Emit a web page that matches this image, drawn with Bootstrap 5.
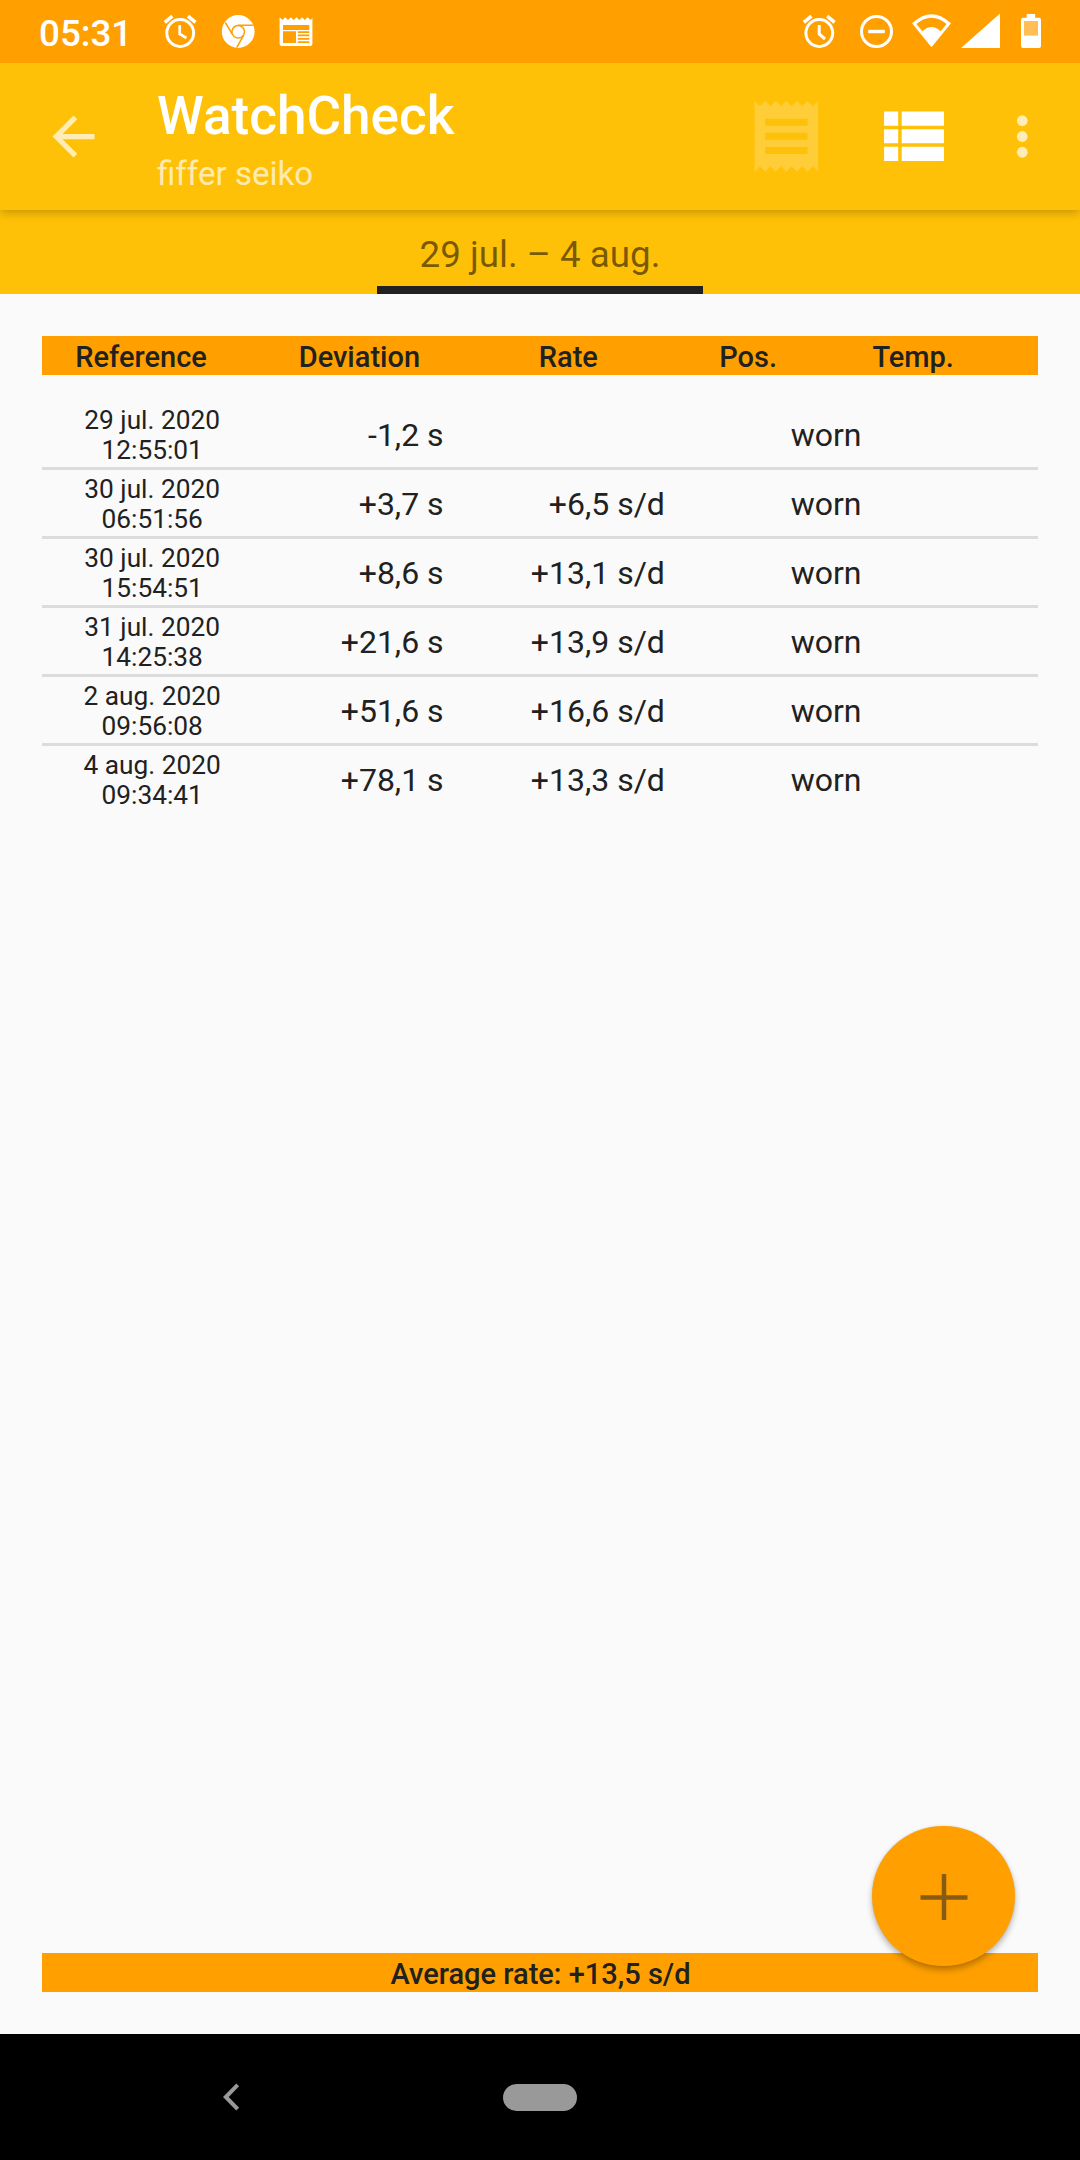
<!DOCTYPE html>
<html lang="en">
<head>
<meta charset="utf-8">
<meta name="viewport" content="width=device-width, initial-scale=1">
<title>WatchCheck</title>
<link href="https://cdn.jsdelivr.net/npm/bootstrap@5.3.0/dist/css/bootstrap.min.css" rel="stylesheet">
<style>
  body { font-family: Roboto, "Noto Sans", sans-serif; background: #fafafa; color: #212121; }
  .screen { width: 1080px; height: 2160px; background: #fafafa; }
  svg { display: block; flex: none; }

  .status-bar { height: 63px; background: #ffa000; padding: 0 35px 0 39px; color: #fff; }
  .clock { font-size: 36.75px; font-weight: 500; line-height: 63px; padding-top: 2px; width: 121px; }

  .app-bar { height: 147px; background: #ffc107; color: #fff; padding: 0 26px 0 42px; z-index: 2;
             box-shadow: 0 3px 9px rgba(0, 0, 0, .22); clip-path: inset(0 0 -16px 0); }
  .app-title { font-size: 53.1px; font-weight: 500; line-height: 60px; }
  .app-subtitle { font-size: 33.1px; line-height: 40px; margin-top: 8px; color: rgba(255, 255, 255, .7); }
  .titles { padding-top: 23px; margin-left: 52px; }
  .action-gap { margin-right: 41px; }

  .tab-strip { height: 84px; background: #ffc107; }
  .tab-item { width: 326px; border-bottom: 8px solid #212121; font-size: 36.75px; line-height: 71px;
              padding-top: 9px; height: 84px; color: rgba(0, 0, 0, .54); }

  .log-area { padding: 42px; }
  .band { height: 39px; background: #ffa000; font-size: 29px; font-weight: 500; line-height: 39px; padding-top: 2px; }
  .h-ref { width: 198.2px; } .h-dev { width: 238.4px; } .h-rate { width: 179.6px; }
  .h-pos { width: 180px; } .h-temp { width: 150px; }
  .band-total { padding-left: 1px; }

  .log-rows { margin-top: 26px; }
  .log-row { height: 69px; border-bottom: 3px solid #dcdcdc; }
  .log-row:last-child { border-bottom-color: transparent; }
  .c-ref { width: 221.3px; font-size: 26.25px; line-height: 30px; padding: 1px 1px 0 0; }
  .c-val { width: 221.3px; font-size: 32px; line-height: 60px; padding: 2px 41px 0 0; }
  .c-pos { width: 221.3px; font-size: 32px; line-height: 60px; padding: 2px 0 0 19px; }

  .fab { width: 143px; height: 140px; left: 872px; top: 1826px; background: #ffa000; z-index: 3;
         box-shadow: 0 4px 6px rgba(0, 0, 0, .27), 0 0 2px rgba(0, 0, 0, .12); }

  .nav-bar { height: 126px; background: #000; padding-left: 222px; }
  .home-pill { width: 74px; height: 27px; background: #999; margin-left: 263px; }
</style>
</head>
<body>
<div class="screen d-flex flex-column position-relative overflow-hidden">

  <header class="status-bar d-flex">
    <div class="clock">05:31</div>
    <svg width="160" height="63" viewBox="160 0 160 63" fill="none" stroke="#fff">
      <!-- alarm -->
      <circle cx="180.2" cy="33" r="13.4" stroke-width="3"/>
      <path d="M179.7 25V34L186.4 38" stroke-width="2.7"/>
      <path d="M164.8 22.4L172.3 16.2M188 16.2L195.5 22.4" stroke-width="3.6"/>
      <!-- browser -->
      <circle cx="238.2" cy="31.5" r="16.4" fill="#fff" stroke="none"/>
      <circle cx="238.2" cy="31.8" r="6.3" stroke="#ffa000" stroke-width="1.5"/>
      <path d="M238 25.2H253.4M232.6 34.6L225.2 22.4M243.8 34.8L236.7 47.6" stroke="#ffa000" stroke-width="1.6"/>
      <!-- news -->
      <path d="M279.6 17.2l2.8 2.8 2.8-2.8 2.8 2.8 2.8-2.8 2.8 2.8 2.8-2.8 2.8 2.8 2.8-2.8 2.8 2.8 2.8-2.8 2.8 2.800 2-2V43.500a2.500 2.500 0 0 1-2.500 2.500H282.100a2.500 2.500 0 0 1-2.500-2.500z" fill="#fff" stroke="none"/>
      <path d="M283 25h26.300v5H283zM283 31.200h13V43H283zM297.800 31.200h11.500v1.700h-11.500zM297.800 34.600h11.500v1.700h-11.500zM297.800 38h11.500v1.700h-11.500zM297.800 41.300h11.500V43h-11.500z" fill="#ffa000" stroke="none"/>
    </svg>
    <svg class="ms-auto" width="245" height="63" viewBox="800 0 245 63" fill="none" stroke="#fff">
      <circle cx="819.3" cy="33" r="13.4" stroke-width="3"/>
      <path d="M819.2 25V34L825 39" stroke-width="3"/>
      <path d="M803.9 22.4L811.4 16.2M827.1 16.2L834.6 22.4" stroke-width="3.6"/>
      <!-- do not disturb -->
      <circle cx="876.5" cy="31.5" r="15" stroke-width="3"/>
      <path d="M868.2 31.5H884.8" stroke-width="3.4"/>
      <!-- wifi -->
      <path d="M912 23.3Q931.5 5 951 23.3L931.5 47.2Z" fill="#fff" stroke="none"/>
      <path d="M916.4 24Q931.5 11.4 946.6 24L940.6 31.2Q931.5 22.8 922.4 31.2Z" fill="#ffa000" stroke="none"/>
      <!-- signal and battery -->
      <path d="M961 48L1000 13.5V48Z" fill="#fff" stroke="none"/>
      <path d="M1026.7 14h8.4v3.7h3.9a2 2 0 0 1 2 2V46a2 2 0 0 1-2 2h-16a2 2 0 0 1-2-2V19.7a2 2 0 0 1 2-2h3.7z" fill="#fff" stroke="none"/>
      <path d="M1024 21h14v14.6h-14z" fill="#ffbf55" stroke="none"/>
    </svg>
  </header>

  <nav class="app-bar d-flex position-relative">
    <svg class="align-self-center" width="63" height="63" viewBox="0 0 24 24" fill="#fff" fill-opacity=".7"><path d="M20 11H7.83l5.59-5.59L12 4l-8 8 8 8 1.41-1.41L7.83 13H20z"/></svg>
    <div class="titles">
      <div class="app-title">WatchCheck</div>
      <div class="app-subtitle">fiffer seiko</div>
    </div>
    <div class="d-flex align-items-center ms-auto">
      <svg class="action-gap" width="84.7" height="84.7" viewBox="0 0 24 24" fill="#fff" fill-opacity=".2"><path d="M18 17H6v-2h12v2zm0-4H6v-2h12v2zm0-4H6V7h12v2zM3 22l1.5-1.5L6 22l1.5-1.5L9 22l1.5-1.5L12 22l1.5-1.5L15 22l1.5-1.5L18 22l1.5-1.5L21 22V2l-1.5 1.5L18 2l-1.5 1.5L15 2l-1.5 1.5L12 2l-1.5 1.5L9 2 7.500 3.500 6 2 4.500 3.500 3 2v20z"/></svg>
      <svg width="84.5" height="84.5" viewBox="0 0 24 24" fill="#fff"><path d="M4 14h4v-4H4v4zm0 5h4v-4H4v4zM4 9h4V5H4v4zm5 5h12v-4H9v4zm0 5h12v-4H9v4zM9 5v4h12V5H9z"/></svg>
      <svg width="100" height="63" viewBox="-14 0 38.095 24" fill="#fff" fill-opacity=".7"><circle cx="12" cy="6" r="2.05"/><circle cx="12" cy="12" r="2.05"/><circle cx="12" cy="18" r="2.05"/></svg>
    </div>
  </nav>

  <div class="tab-strip d-flex justify-content-center">
    <div class="tab-item text-center">29 jul. – 4 aug.</div>
  </div>

  <main class="log-area flex-grow-1 d-flex flex-column">
    <div class="band d-flex text-center">
      <div class="h-ref">Reference</div><div class="h-dev">Deviation</div><div class="h-rate">Rate</div><div class="h-pos">Pos.</div><div class="h-temp">Temp.</div>
    </div>
    <div class="log-rows">
      <div class="log-row d-flex align-items-center"><div class="c-ref text-center">29 jul. 2020<br>12:55:01</div><div class="c-val text-end">-1,2 s</div><div class="c-val text-end"></div><div class="c-pos text-center">worn</div></div>
      <div class="log-row d-flex align-items-center"><div class="c-ref text-center">30 jul. 2020<br>06:51:56</div><div class="c-val text-end">+3,7 s</div><div class="c-val text-end">+6,5 s/d</div><div class="c-pos text-center">worn</div></div>
      <div class="log-row d-flex align-items-center"><div class="c-ref text-center">30 jul. 2020<br>15:54:51</div><div class="c-val text-end">+8,6 s</div><div class="c-val text-end">+13,1 s/d</div><div class="c-pos text-center">worn</div></div>
      <div class="log-row d-flex align-items-center"><div class="c-ref text-center">31 jul. 2020<br>14:25:38</div><div class="c-val text-end">+21,6 s</div><div class="c-val text-end">+13,9 s/d</div><div class="c-pos text-center">worn</div></div>
      <div class="log-row d-flex align-items-center"><div class="c-ref text-center">2 aug. 2020<br>09:56:08</div><div class="c-val text-end">+51,6 s</div><div class="c-val text-end">+16,6 s/d</div><div class="c-pos text-center">worn</div></div>
      <div class="log-row d-flex align-items-center"><div class="c-ref text-center">4 aug. 2020<br>09:34:41</div><div class="c-val text-end">+78,1 s</div><div class="c-val text-end">+13,3 s/d</div><div class="c-pos text-center">worn</div></div>
    </div>
    <div class="band band-total text-center mt-auto">Average rate: +13,5 s/d</div>
  </main>

  <button type="button" class="fab btn border-0 rounded-circle p-0 position-absolute d-flex align-items-center justify-content-center" aria-label="Add">
    <svg width="48" height="48" viewBox="0 0 48 48" stroke="#212121" stroke-opacity=".54" fill="none"><path d="M.5 25.5H47.5M24 2V23.25M24 27.750V48" stroke-width="4.500"/></svg>
  </button>

  <footer class="nav-bar d-flex align-items-center">
    <svg width="18" height="28" viewBox="0 0 18 28" fill="none" stroke="#999" stroke-width="4"><path d="M15.700 1.800L3.800 14 15.700 26.200"/></svg>
    <div class="home-pill rounded-pill"></div>
  </footer>
</div>
<script src="https://cdn.jsdelivr.net/npm/bootstrap@5.3.0/dist/js/bootstrap.bundle.min.js"></script>
</body>
</html>
